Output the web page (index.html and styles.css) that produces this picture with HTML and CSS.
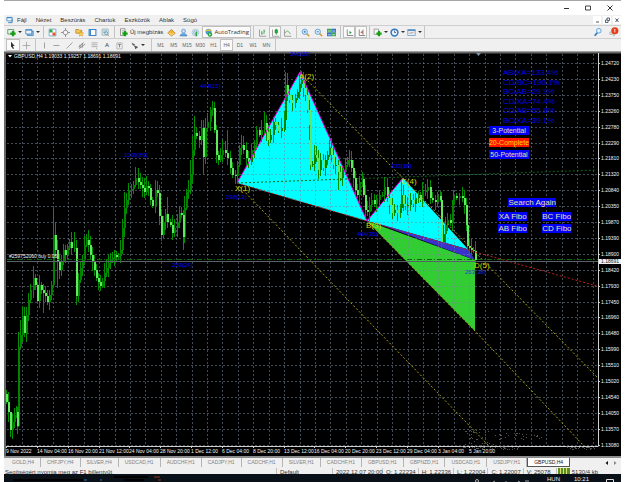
FILE: index.html
```html
<!DOCTYPE html>
<html lang="hu">
<head>
<meta charset="utf-8">
<title>GBPUSD,H4</title>
<link rel="stylesheet" href="styles.css">
</head>
<body>
<div class="window">
  <header class="titlebar">
    <button class="winbtn" aria-label="Kis méret"><svg viewBox="0 0 8 8"><path d="M2 4.500h5" stroke="#333"/></svg></button>
    <button class="winbtn" aria-label="Teljes méret"><svg viewBox="0 0 8 8"><path d="M1.500 2h5v4h-5z" stroke="#444"/></svg></button>
    <button class="winbtn" aria-label="Bezárás"><svg viewBox="0 0 8 8"><path d="M1.500 1.500l5 5M6.500 1.500l-5 5" stroke="#333"/></svg></button>
  </header>

  <nav class="menubar">
    <svg class="appicon" viewBox="0 0 8 8"><path d="M1 1h6v4H1z" fill="#fff" stroke="#4a90c8"/><path d="M1 1.500h6M2.500 7h4.500V3" stroke="#2f7dbd" fill="none"/></svg>
    <a href="#">Fájl</a><a href="#">Nézet</a><a href="#">Beszúrás</a><a href="#">Chartok</a><a href="#">Eszközök</a><a href="#">Ablak</a><a href="#">Súgó</a>
    <span class="childbtns">
      <button aria-label="Kis méret"><svg viewBox="0 0 8 8"><path d="M3 6h3" stroke="#555"/></svg></button>
      <button aria-label="Visszaállítás"><svg viewBox="0 0 8 8"><path d="M2.500 4h2.500v2.500h-2.500zM4 4V2h2.500v2.500H5" stroke="#567" fill="none"/></svg></button>
      <button aria-label="Bezárás"><svg viewBox="0 0 8 8"><path d="M2.500 2.500l3 3.500M5.500 2.500l-3 3.500" stroke="#456"/></svg></button>
    </span>
  </nav>

  <div class="toolbar main">
    <div class="group g-files">
      <button class="drop" aria-label="Új chart"><svg viewBox="0 0 12 12"><path d="M1 2h8v6H1z" fill="#e8f4e8" stroke="#3d8a5a"/><path d="M8 4v7M4.500 7.500h7" stroke="#12a012" stroke-width="3"/></svg></button>
      <button class="drop" aria-label="Profilok"><svg viewBox="0 0 12 12"><path d="M3 4h8v6H3z" fill="#8fc0e8" stroke="#3b7fb8"/><path d="M1 2h8v6H1z" fill="#e6f2fc" stroke="#3b7fb8"/><path d="M1 3h8" stroke="#3b7fb8"/></svg></button>
    </div>
    <div class="group g-panels">
      <button aria-label="Piacfigyelő"><svg viewBox="0 0 12 12"><path d="M1.500 1.500h9v9h-9z" fill="#fff" stroke="#5a9bcb"/><path d="M2 2h4v4H2z" fill="#28a745"/><path d="M6 6h4v4H6z" fill="#e8542c"/></svg></button>
      <button aria-label="Adatablak"><svg viewBox="0 0 12 12"><path d="M6 0v12M0 6h12" stroke="#777"/><circle cx="6" cy="6" r="3" fill="#fafafa" stroke="#777"/></svg></button>
      <button aria-label="Navigátor"><svg viewBox="0 0 12 12"><path d="M1 2h4l1 1h3v4H1z" fill="#f3c55b" stroke="#b98726"/><path d="M8 4l1 2.500 2.500.2-2 1.600.8 2.500L8 9.500l-2.300 1.300.8-2.500-2-1.600L7 6.500z" fill="#ffd34d" stroke="#c8851a" stroke-width=".6"/></svg></button>
      <button aria-label="Terminál"><svg viewBox="0 0 12 12"><path d="M1.500 2h9v8h-9z" fill="#fff" stroke="#3b86c8" stroke-width="1.500"/><path d="M3 2v8" stroke="#3b86c8" stroke-width="2"/></svg></button>
      <button aria-label="Stratégiateszter"><svg viewBox="0 0 12 12"><path d="M1.500 1.500h8v8h-8z" fill="#e8f1f8" stroke="#8aa"/><path d="M3 4h5M3 6h4" stroke="#5c8db5"/><circle cx="7" cy="7" r="2" fill="#cfe6f5" stroke="#5c8db5"/><path d="M8.500 8.500l2.500 2.500" stroke="#c93"/></svg></button>
    </div>
    <div class="group g-trade">
      <button class="wide"><svg viewBox="0 0 12 12"><path d="M2 1h6v9H2z" fill="#fff" stroke="#777"/><path d="M3.500 3.500h3M3.500 5.500h3" stroke="#999"/><path d="M8 4v7M4.500 7.500h7" stroke="#12a012" stroke-width="3"/></svg>Új megbízás</button>
      <button aria-label="MetaEditor"><svg viewBox="0 0 12 12"><path d="M1 6.500L6 2l5 5-5 3.500z" fill="#f2b53a" stroke="#b77a16"/><path d="M2 6.500l4 2.500 4-2" stroke="#fff2b0" fill="none"/></svg></button>
      <button aria-label="Közösség"><svg viewBox="0 0 12 12"><circle cx="6" cy="4" r="2.500" fill="#cfe3f5" stroke="#4c8ecb"/><path d="M1.500 10.500c0-4 9-4 9 0z" fill="#6cabe2" stroke="#3c7fc0"/></svg></button>
      <button aria-label="Jelzések"><svg viewBox="0 0 12 12"><circle cx="6" cy="6" r="4.500" fill="none" stroke="#9bbbd0"/><circle cx="6" cy="6" r="2.500" fill="#d7e8f2" stroke="#7aa6c4"/><path d="M7 5v6" stroke="#2ba84a" stroke-width="2"/></svg></button>
      <button class="wide pressed auto"><svg viewBox="0 0 12 12"><circle cx="6" cy="5" r="4" fill="#4f9bd6"/><path d="M1 4.500c3-4 7-4 10 0l-5-1z" fill="#f1c232"/><circle cx="8" cy="8.500" r="3" fill="#1fa33a"/><path d="M7 7v3l2.500-1.500z" fill="#fff"/></svg>AutoTrading</button>
    </div>
    <div class="group g-charts">
      <button aria-label="Oszlopok"><svg viewBox="0 0 12 12"><path d="M2 2v9h9" stroke="#888"/><path d="M5 4v5M8 2v6M5 7h1.500M8 4h1.500" stroke="#2a9a3a"/></svg></button>
      <button class="pressed" aria-label="Gyertyák"><svg viewBox="0 0 12 12"><path d="M2 2v9h9" stroke="#888"/><path d="M7 1v8" stroke="#178a28"/><path d="M5.500 2.500h3v4h-3z" fill="#25b83d" stroke="#178a28"/></svg></button>
      <button aria-label="Vonal"><svg viewBox="0 0 12 12"><path d="M2 2v9h9" stroke="#888"/><path d="M3 7c2-5 4-3 7 1" stroke="#4a9a55" fill="none"/></svg></button>
    </div>
    <div class="group g-zoom">
      <button aria-label="Nagyítás"><svg viewBox="0 0 12 12"><path d="M7.500 7.500l3.500 3.500" stroke="#d59b36" stroke-width="2"/><circle cx="5" cy="5" r="3.500" fill="#dff0fd" stroke="#3f8bd0"/><path d="M5 3.500v3M3.500 5h3" stroke="#2a6fb5"/></svg></button>
      <button aria-label="Kicsinyítés"><svg viewBox="0 0 12 12"><path d="M7.500 7.500l3.500 3.500" stroke="#d59b36" stroke-width="2"/><circle cx="5" cy="5" r="3.500" fill="#dff0fd" stroke="#3f8bd0"/><path d="M3.500 5h3" stroke="#2a6fb5"/></svg></button>
      <button aria-label="Mozaik"><svg viewBox="0 0 12 12"><path d="M0 1h6v5H0zM6 6h6v5H6z" fill="#35a647"/><path d="M6 1h6v5H6zM0 6h6v5H0z" fill="#2d6fc4"/><path d="M1 4h4M7 4h4M1 9h4M7 9h4" stroke="#e8f4ff"/></svg></button>
    </div>
    <div class="group g-shift">
      <button class="pressed" aria-label="Automatikus görgetés"><svg viewBox="0 0 12 12"><path d="M3 2v8h8" stroke="#666"/><path d="M6 4v4l3-2z" fill="#1d9a33"/></svg></button>
      <button class="pressed" aria-label="Eltolás"><svg viewBox="0 0 12 12"><path d="M3 2v8h8M8 2v7" stroke="#666"/><path d="M7.500 3.500v4l-3-2z" fill="#c0562a"/></svg></button>
    </div>
    <div class="group g-more">
      <button class="drop" aria-label="Indikátorok"><svg viewBox="0 0 12 12"><path d="M1.500 1.500h6v7h-6z" fill="#f5f5f5" stroke="#888"/><path d="M8 4v7M4.500 7.500h7" stroke="#12a012" stroke-width="3"/></svg></button>
      <button class="drop" aria-label="Időtávok"><svg viewBox="0 0 12 12"><circle cx="6" cy="6" r="4.500" fill="#e9f3fc" stroke="#2f78c4" stroke-width="2"/><path d="M6 3.500V6h2" stroke="#345" fill="none"/></svg></button>
      <button class="drop" aria-label="Sablonok"><svg viewBox="0 0 12 12"><path d="M1 2h10v8H1z" fill="#e4f0fa" stroke="#6a9ac4"/><path d="M1 3h10" stroke="#5b90c0" stroke-width="2"/><path d="M3 8l2-2 2 1 2-2" stroke="#d0702c" fill="none"/></svg></button>
    </div>
    <div class="tail">
      <button aria-label="Keresés"><svg viewBox="0 0 12 12"><path d="M5 7L2 10.500" stroke="#2e78bd" stroke-width="2"/><circle cx="7" cy="4.500" r="2.800" fill="#e6f3fd" stroke="#4a96d4"/></svg></button>
      <button aria-label="Értesítések"><svg viewBox="0 0 12 12"><path d="M1 6h7l-2 5-1-2H1z" fill="#ddd" stroke="#bbb"/><circle cx="7" cy="4.500" r="4.300" fill="#e63c17"/><path d="M6 3.500l1-1v4" stroke="#fff" fill="none"/></svg></button>
    </div>
  </div>

  <div class="toolbar draw">
    <div class="group g-cursor">
      <button class="pressed" aria-label="Kurzor"><svg viewBox="0 0 12 12"><path d="M4 1l5 5.500H6.500L8 10l-1.500.5L5 7.500 4 8.500z" fill="#333"/></svg></button>
      <button aria-label="Szálkereszt"><svg viewBox="0 0 12 12"><path d="M6 1v10M1 6h10" stroke="#999"/></svg></button>
    </div>
    <div class="group g-lines">
      <button aria-label="Függőleges"><svg viewBox="0 0 12 12"><path d="M6 2v8" stroke="#888"/></svg></button>
      <button aria-label="Vízszintes"><svg viewBox="0 0 12 12"><path d="M2 6h8" stroke="#888"/></svg></button>
      <button aria-label="Trendvonal"><svg viewBox="0 0 12 12"><path d="M2 10l8-8" stroke="#888"/></svg></button>
      <button aria-label="Csatorna"><svg viewBox="0 0 12 12"><path d="M2 8l7-6M3 10l8-6M4 5v4M7 3v6" stroke="#777"/></svg></button>
      <button aria-label="Fibonacci"><svg viewBox="0 0 12 12"><path d="M2 2.500h8M2 5h8M2 7.500h8M9 9v2" stroke="#999"/></svg></button>
      <button>A</button>
      <button aria-label="Címke"><svg viewBox="0 0 12 12"><path d="M2.500 2.500h7v8h-7z" stroke="#aaa" fill="none"/><path d="M4 4.500h4M6 4.500v4" stroke="#666"/></svg></button>
      <button class="drop" aria-label="Nyilak"><svg viewBox="0 0 12 12"><path d="M2 2l5 3-3 1zM6 6l5 2-4 3z" fill="#555"/><path d="M4 4l4 5" stroke="#555"/></svg></button>
    </div>
    <div class="group g-frames">
      <button>M1</button><button>M5</button><button>M15</button><button>M30</button><button>H1</button><button class="pressed">H4</button><button>D1</button><button>W1</button><button>MN</button>
    </div>
  </div>

  <main class="chart">
    <svg id="plot" class="plot" viewBox="4 51 617 405" role="img" aria-label="GBPUSD,H4"></svg>
    <div class="patterns">
      <button>3-Potential</button>
      <button class="hot">20-Complete</button>
      <button>50-Potential</button>
    </div>
    <div class="fibo">
      <button class="search">Search Again</button>
      <button>XA Fibo</button><button>BC Fibo</button>
      <button>AB Fibo</button><button>CD Fibo</button>
    </div>
  </main>

  <nav class="tabs">
    <a href="#">GOLD,H4</a><a href="#">CHFJPY,H4</a><a href="#">SILVER,H4</a><a href="#">USDCAD,H1</a><a href="#">AUDCHF,H1</a><a href="#">CADJPY,H1</a><a href="#">CADCHF,H1</a><a href="#">SILVER,H1</a><a href="#">CADCHF,H1</a><a href="#">GBPUSD,H1</a><a href="#">GBPNZD,H1</a><a href="#">USDCAD,H1</a><a href="#">USDJPY,H1</a><a href="#" class="active">GBPUSD,H4</a>
    <span class="scroll"><button aria-label="Balra"><svg viewBox="0 0 8 8"><path d="M5 2v4L2.500 4z" fill="#111"/></svg></button><button aria-label="Jobbra"><svg viewBox="0 0 8 8"><path d="M3 2v4l2.500-2z" fill="#888"/></svg></button></span>
  </nav>

  <footer class="status">
    <span class="help">Segítségért nyomja meg az F1 billentyűt</span>
    <span class="profile">Default</span>
    <span class="time">2022.12.07 20:00</span>
    <span>O: 1.22234</span>
    <span>H: 1.22336</span>
    <span>L: 1.22004</span>
    <span>C: 1.22007</span>
    <span class="volume">V: 25078</span>
    <span class="net"><svg viewBox="0 0 12 6"><path d="M0 0h12v6H0z" fill="#5d8f1e"/><path d="M2.500 0v6M5.500 0v6M8.500 0v6" stroke="#d7e37a"/></svg>5130/4 kb</span>
  </footer>

  <div class="taskbar">
    <svg class="strip" viewBox="0 0 160 8"><path d="M9 6h70M110 3h34M120 6h20" stroke="#000" stroke-width="2"/><path d="M80 6h3M96 6h2" stroke="#2b6cb0"/><path d="M150 3h6M154 6h3" stroke="#8a3a12"/></svg>
    <svg class="tray" viewBox="0 0 60 8"><circle cx="4" cy="7" r="1.500" fill="none" stroke="#aaa"/><path d="M20 8l2-1M33 7v1M45 7l2 1M52 7h4" stroke="#999"/></svg>
    <span>HUN</span><span>10:21</span>
    <svg class="note" viewBox="0 0 10 8"><path d="M1.500 5.500h7v5h-7z" fill="none" stroke="#ddd"/></svg>
  </div>
</div>
<script src="chart.js"></script>
</body>
</html>
```
FILE: styles.css
```css
* { box-sizing: border-box; }

body {
  margin: 0;
  background: #fff;
  color: #333;
  font-family: "Liberation Sans", Arial, sans-serif;
  font-size: 6px;
  line-height: 8px;
}

button {
  margin: 0;
  padding: 0;
  border: 0;
  background: none;
  color: inherit;
  font: inherit;
  white-space: nowrap;
}

a { color: inherit; text-decoration: none; white-space: nowrap; }
svg { display: block; fill: none; }

.window { margin: 0 4px; border-top: 1px solid #a6a6a6; }

.titlebar {
  display: flex;
  justify-content: flex-end;
  align-items: center;
  gap: 14px;
  height: 14px;
  padding-right: 7px;
}
.winbtn svg { width: 8px; height: 8px; }

.menubar {
  display: flex;
  align-items: center;
  gap: 9px;
  height: 10px;
  padding-left: 2px;
  background: #f0f0f0;
}
.appicon { width: 7px; height: 8px; margin-right: -5px; }
.childbtns { display: flex; gap: 2px; margin-left: auto; }
.childbtns button { background: #fff; }
.childbtns svg { width: 8px; height: 8px; }

.toolbar {
  display: flex;
  align-items: center;
  height: 13px;
  background: #f0f0f0;
  border-top: 1px solid #cfcfcf;
}
.toolbar svg { width: 9px; height: 9px; flex: none; }
.group {
  display: flex;
  align-items: center;
  height: 12px;
  padding: 0 2px;
  border-right: 1px solid #c4c4c4;
}
.group button {
  display: flex;
  flex: 1 1 0;
  align-items: center;
  justify-content: center;
  height: 12px;
  border: 1px solid transparent;
}
.group .wide { flex: none; gap: 2px; padding: 0 1px; }
.group .auto { font-family: "Open Sans", sans-serif; }
.group .pressed { background: #fafafa; border-color: #c0c0c0; }
.drop::after {
  content: "";
  margin-left: 2px;
  border: 2px solid transparent;
  border-top-color: #333;
  border-bottom: 0;
}
.g-files { width: 40px; }
.g-panels { width: 71px; }
.g-trade { width: 139px; }
.g-charts { width: 43px; }
.g-zoom { width: 44px; }
.g-shift { width: 29px; }
.g-more { width: 55px; }
.g-cursor { width: 32px; }
.g-lines { width: 116px; }
.g-lines .drop { flex-grow: 2; }
.g-frames { width: 124px; font-size: 5px; color: #666; }
.tail { display: flex; gap: 6px; margin-left: auto; padding-right: 2px; }
.tail svg { width: 10px; height: 10px; }

.chart { position: relative; background: #000; }
.plot { width: 100%; height: auto; }
.plot text { font-family: "Liberation Sans", Arial, sans-serif; }
.plot .axis { font-size: 5px; fill: #f4f4f4; }
.plot .current { fill: #222; }
.plot .count { font-size: 6px; fill: #0000ff; }
.plot .ratio { font-size: 8px; fill: #0000e8; }
.plot .point { font-size: 8px; fill: #d8d800; }
.plot .under { fill: #2438c8; }

/* Panels floating over the price plot */
.patterns, .fibo { position: absolute; display: grid; color: #e6e6a0; }
.patterns { left: 78.600%; top: 18.400%; width: 38px; gap: 3px; font-size: 7px; line-height: 9px; }
.fibo { left: 80.100%; top: 36.300%; width: 73px; grid-template-columns: 29px 29px; justify-content: space-between; row-gap: 3px; font-size: 8px; line-height: 9px; }
.patterns button, .fibo button { height: 9px; background: #0000f8; }
.patterns .hot { background: #ff1400; color: #ffd800; }
.fibo .search { grid-column: 1 / -1; justify-self: start; width: 48px; margin: 0 0 2px 10px; }

.tabs {
  display: flex;
  height: 12px;
  border-top: 2px solid #8c8c8c;
  background: #f0f0f0;
  color: #808080;
  font-size: 5px;
  line-height: 9px;
  padding-left: 2px;
}
.tabs a { padding: 0 6px; border-right: 1px solid #b4b4b4; height: 9px; }
.tabs .active { background: #fff; border: 1px solid #555; border-top: 0; color: #111; }
.scroll { display: flex; margin-left: auto; padding-right: 2px; }
.scroll svg { width: 8px; height: 8px; }

.status {
  display: flex;
  height: 6px;
  overflow: hidden;
  background: #f0f0f0;
  line-height: 8px;
}
.status span { padding: 0 2px 0 3px; border-right: 1px solid #c0c0c0; white-space: nowrap; }
.status .help { width: 273px; padding-left: 1px; }
.status .profile { width: 56px; }
.status .time { width: 50px; }
.status .volume { width: 33px; }
.status .net { display: flex; gap: 2px; padding-left: 1px; border: 0; }
.status .net svg { width: 12px; height: 6px; }

.taskbar {
  display: flex;
  height: 8px;
  gap: 14px;
  overflow: hidden;
  background: #0a1018;
  color: #e8e8e8;
  font-size: 6px;
  line-height: 10px;
  padding-right: 6px;
}
.strip { width: 160px; height: 8px; }
.tray { width: 60px; height: 8px; margin-left: auto; }
.note { width: 10px; height: 8px; margin-left: 2px; }
```
FILE: chart.js
```js
const NS = "http://www.w3.org/2000/svg";
const plot = document.getElementById("plot");

function add(name, attrs, text) {
  const el = document.createElementNS(NS, name);
  for (const key in attrs) el.setAttribute(key, attrs[key]);
  if (text !== undefined) el.textContent = text;
  plot.appendChild(el);
}
const path = (d, attrs) => add("path", Object.assign({ d }, attrs));

// Harmonic pattern areas
path("M237 183L300 72L367 221Z", { fill: "#00ffff" });
path("M367 221L403 178L467 248L475 260L467 249Z", { fill: "#00ffff" });
path("M367 221L475 260V331Z", { fill: "#32cd32" });
path("M376 223L467 249L475 260Z", { fill: "#3a32cd" });

// Grid
const stepX = 15.42, stepY = 15.9;
let grid = "";
for (let i = 0; i < 38; i++) grid += `M${Math.round(22 + i * stepX) + 0.5} 54V446`;
for (let i = 0; i < 25; i++) grid += `M7 ${Math.round(63 + i * stepY) + 0.5}H598`;
path(grid, { stroke: "#76889a", "stroke-opacity": 0.55, "stroke-dasharray": "2 2" });

// Price track: x, close, optional high, optional low
const track = [
[6,402,390],[8,412,392,422],[10,430,412,437],[12,422],[14,415],[16,412],[17,426],[18,347,332,427],[20,335,320],[22,316,306],[24,333],[26,315],[28,300],[30,290],[33,278,266],[35,285],[37,301],[39,285],[41,290,282],[43,293,284,313],[45,296],[47,302],[49,295],[51,285],[53,235,208],[55,250,222],[57,262,240,288],[59,270],[61,262],[63,250],[65,255],[67,248],[69,242],[71,248],[74,248,232],[76,296],[78,280],[80,268],[82,260],[84,245,236],[86,240,234],[88,245],[90,255],[92,262],[94,270],[96,278],[98,282],[100,286,275,291],[102,281],[104,273],[106,268],[108,263],[110,260],[112,258],[114,255],[116,257],[118,256],[120,250],[122,228],[124,208,192],[126,200],[128,190,183,205],[131,189],[133,185],[135,178,167],[138,182],[140,185],[142,188],[144,192,178],[146,186,176],[148,188],[150,200],[152,206],[155,190,180],[157,193],[159,216],[161,235],[163,222],[165,214],[167,222,197,228],[170,225],[172,233],[174,228],[177,222],[179,213],[181,215],[183,237,210,250],[184,208,196,243],[186,192],[188,190],[190,175,160],[192,150,136],[194,133,116],[196,136],[199,140],[201,128,120],[203,157,120,174],[205,128],[207,122],[210,110,107],[212,108],[214,130],[216,155],[218,160],[220,155,148],[222,150],[225,153],[227,158,130,165],[230,168],[232,175],[235,176],[237,165],[239,148],[241,145],[243,150],[246,158],[248,162],[251,150],[254,145],[256,130],[259,135],[261,130],[264,123,112],[266,132],[268,140],[270,135],[273,122],[275,125],[278,131],[281,128],[284,120],[285,85,72,130],[287,95,73],[289,100],[292,103],[295,98],[297,92],[299,84],[301,80],[303,88],[305,95],[307,110],[309,125,100,140],[310,165],[312,164],[314,155],[316,158],[318,170],[320,160],[323,168],[325,160],[327,155],[329,148,140],[331,155],[333,165],[335,165],[338,172,160,190],[340,178],[342,170],[345,165,158],[347,160],[349,160],[351,168],[353,178],[355,190],[357,195],[359,182,176],[362,179,172],[363,195],[365,210],[367,212],[369,205],[371,200],[374,204],[376,200],[379,195],[382,195],[384,187],[387,198],[389,205],[392,213],[394,210],[397,213],[400,208],[401,195,180],[403,204],[405,206],[407,205],[410,200],[413,204],[415,198],[418,195],[420,200],[422,192],[425,190,184],[427,187],[430,198],[432,200],[435,202],[437,196],[440,200,191],[441,242,192,248],[443,234],[445,225],[447,220],[450,223],[452,205],[453,196,190],[456,198],[459,196,193],[462,198],[464,205],[466,225],[467,246],[469,248,240],[471,250,239],[473,251],[475,260,241]
];
let wicks = "", up = "", down = "";
track.forEach(([x, close, high, low], i) => {
  const open = i ? track[i - 1][1] : close - 8;
  const top = Math.min(open, close), bottom = Math.max(open, close);
  const h = high ?? top - 3 - (i * 7) % 8;
  const l = low ?? bottom + 2 + (i * 5) % 8;
  wicks += `M${x + 0.5} ${h}V${l}`;
  const body = `M${x} ${top}h2v${Math.max(1, bottom - top)}h-2z`;
  if (close > open) down += body; else up += body;
});
path(wicks, { stroke: "#009000" });
path(up, { fill: "#008400" });
path(down, { fill: "#60e860" });

// Pattern legs and projections
path("M237 183L300 72L367 221L403 178", { stroke: "#f000e8", "stroke-width": 1 });
path("M237 183L367 221L475 252L597 286", { stroke: "#c02020", "stroke-dasharray": "2 2" });
path("M302 75L597 377M240 187L350 302L490 447M370 224L475 331L584 446", { stroke: "#a8a010", "stroke-dasharray": "2 2" });
path("M237 183L597 170", { stroke: "#0c6418", "stroke-dasharray": "2 2" });
path("M7 259.500H598", { stroke: "#0a6a0a", "stroke-dasharray": "5 2 1 2" });
path("M7 261.500H598", { stroke: "#59626a" });

// Frame and axes
path("M4 51.500H621", { stroke: "#d8d8d8" });
path("M4 52.500H621M5 52V456", { stroke: "#666", "stroke-width": 2 });
path("M598.500 53V446.500M7 446.500H598", { stroke: "#d0d0d0" });
path("M476 53h5l-2.500 3z", { fill: "#8494a4" });

const prices = ["1.24720","1.24230","1.23750","1.23260","1.22780","1.22290","1.21810","1.21320","1.20840","1.20350","1.19870","1.19390","1.18900","1.18420","1.17930","1.17450","1.16960","1.16480","1.15990","1.15510","1.15020","1.14540","1.14050","1.13570","1.13080"];
prices.forEach((price, i) => {
  const y = Math.round(63 + i * stepY);
  path(`M598 ${y + 0.5}h2`, { stroke: "#d0d0d0" });
  add("text", { x: 601, y: y + 2, class: "axis" }, price);
});
path("M599 259h22v5h-22z", { fill: "#f0f0f0" });
add("text", { x: 601, y: 263, class: "axis current" }, "1.18691");

const times = ["9 Nov 2022","14 Nov 04:00","16 Nov 20:00","21 Nov 12:00","24 Nov 04:00","28 Nov 20:00","1 Dec 12:00","6 Dec 04:00","8 Dec 20:00","13 Dec 12:00","16 Dec 04:00","20 Dec 20:00","23 Dec 12:00","29 Dec 04:00","3 Jan 04:00","5 Jan 20:00"];
times.forEach((time, i) => {
  const x = Math.round(6 + i * stepX * 2);
  path(`M${x + 0.5} 446v2`, { stroke: "#d0d0d0" });
  add("text", { x, y: 453, class: "axis" }, time);
});

// Captions
path("M8 55h4l-2 2.500z", { fill: "#fff" });
add("text", { x: 14, y: 58, class: "axis" }, "GBPUSD,H4  1.19033 1.19257 1.18691 1.18691");
add("text", { x: 9, y: 258, class: "axis" }, "#259752060 buy 0.05");
[["1009(89)",124,157],["444(15)",200,88],["340(33)",290,56],["238(13)",226,199],["464(35)",357,236],["133(18)",391,168],["253(24)",172,267]]
  .forEach(([label, x, y]) => add("text", { x, y, class: "count" }, label));
add("text", { x: 465, y: 274, class: "count under" }, "263(38)");
["AB/XA=133.4%","CD/BC=190.1%","BC/AB=29.3%","CD/XA=74.4%","CD/AB=55.8%","BC/XA=39.1%"]
  .forEach((label, i) => add("text", { x: 503, y: 75 + Math.round(i * 9.6), class: "ratio" }, label));
[["X(1)",235,191],["A(2)",299,79],["B(3)",366,228],["C(4)",401,184],["D(5)",474,268]]
  .forEach(([label, x, y]) => add("text", { x, y, class: "point" }, label));

// Faint noise near the lower right corner
let seed = 7;
const rand = (n) => (seed = (seed * 16807) % 2147483647) % n;
let noise = "";
for (let i = 0; i < 34; i++) noise += `M${462 + rand(34)} ${430 + rand(18) + 0.5}h1`;
for (let i = 0; i < 26; i++) noise += `M${496 + rand(48)} ${433 + rand(7) + 0.5}h1`;
for (let i = 0; i < 60; i++) noise += `M${460 + rand(60)} ${446 + rand(4) + 0.5}h1`;
for (let i = 0; i < 36; i++) noise += `M${566 + rand(30)} ${446 + rand(4) + 0.5}h1`;
path(noise, { stroke: "#888", "stroke-opacity": 0.6 });
```
